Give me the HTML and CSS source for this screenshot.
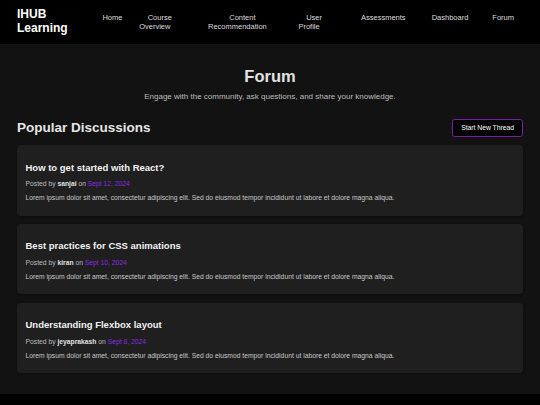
FILE: index.html
```html
<!DOCTYPE html>
<html lang="en">
<head>
<meta charset="utf-8">
<title>Forum - IHUB Learning</title>
<link rel="stylesheet" href="styles.css">
</head>
<body>
<header class="site-header">
  <div class="logo">IHUB Learning</div>
  <nav class="nav">
    <ul class="nav-list">
      <li class="nav-item"><a class="nav-link" href="#">Home</a></li>
      <li class="nav-item"><a class="nav-link" href="#">Course Overview</a></li>
      <li class="nav-item"><a class="nav-link" href="#">Content Recommendation</a></li>
      <li class="nav-item"><a class="nav-link" href="#">User Profile</a></li>
      <li class="nav-item"><a class="nav-link" href="#">Assessments</a></li>
      <li class="nav-item"><a class="nav-link" href="#">Dashboard</a></li>
      <li class="nav-item"><a class="nav-link" href="#">Forum</a></li>
    </ul>
  </nav>
</header>
<main class="main">
  <section class="hero">
    <h1 class="hero-title">Forum</h1>
    <p class="hero-sub">Engage with the community, ask questions, and share your knowledge.</p>
  </section>
  <section class="discussions">
    <div class="section-head">
      <h2 class="section-title">Popular Discussions</h2>
      <button class="btn-new" type="button">Start New Thread</button>
    </div>
    <div class="threads">
      <article class="thread">
        <h3 class="thread-title">How to get started with React?</h3>
        <p class="thread-meta">Posted by <strong class="author">sanjai</strong> on <span class="date">Sept 12, 2024</span></p>
        <p class="thread-text">Lorem ipsum dolor sit amet, consectetur adipiscing elit. Sed do eiusmod tempor incididunt ut labore et dolore magna aliqua.</p>
      </article>
      <article class="thread">
        <h3 class="thread-title">Best practices for CSS animations</h3>
        <p class="thread-meta">Posted by <strong class="author">kiran</strong> on <span class="date">Sept 10, 2024</span></p>
        <p class="thread-text">Lorem ipsum dolor sit amet, consectetur adipiscing elit. Sed do eiusmod tempor incididunt ut labore et dolore magna aliqua.</p>
      </article>
      <article class="thread">
        <h3 class="thread-title">Understanding Flexbox layout</h3>
        <p class="thread-meta">Posted by <strong class="author">jeyaprakash</strong> on <span class="date">Sept 8, 2024</span></p>
        <p class="thread-text">Lorem ipsum dolor sit amet, consectetur adipiscing elit. Sed do eiusmod tempor incididunt ut labore et dolore magna aliqua.</p>
      </article>
    </div>
  </section>
</main>
<footer class="site-footer"></footer>
</body>
</html>
```
FILE: styles.css
```css
html, body {
  margin: 0;
  padding: 0;
}
body {
  background: #000;
  font-family: "Liberation Sans", Arial, sans-serif;
  color: #ddd;
}

/* Header */
.site-header {
  height: 44px;
  box-sizing: border-box;
  padding: 0 17px;
  background: #000;
  display: flex;
  align-items: center;
}
.logo {
  width: min-content;
  font-size: 12px;
  font-weight: bold;
  color: #fff;
  line-height: 13.8px;
}
.nav {
  margin-left: auto;
}
.nav-list {
  display: flex;
  list-style: none;
  margin: 0;
  padding: 0 4px 0 0;
  font-size: 7.5px;
  line-height: 9px;
}
.nav-item {
  width: min-content;
  text-align: center;
}
.nav-item:nth-child(2) { margin-left: 11.7px; }
.nav-item:nth-child(3) { margin-left: 32.6px; }
.nav-item:nth-child(4) { margin-left: 26.7px; }
.nav-item:nth-child(5) { margin-left: 31.3px; }
.nav-item:nth-child(6) { margin-left: 16px; }
.nav-item:nth-child(7) { margin-left: 14px; }
.nav-link {
  color: #ddd;
  text-decoration: none;
  padding: 0 5px;
}

/* Main */
.main {
  background: #121212;
  padding: 0 17px 21px;
  overflow: hidden;
}
.hero {
  text-align: center;
  padding-top: 22.7px;
}
.hero-title {
  margin: 0;
  font-size: 16.5px;
  line-height: 19px;
  font-weight: bold;
  color: #e2e2e2;
}
.hero-sub {
  margin: 6.5px 0 0;
  font-size: 8px;
  line-height: 9.2px;
  color: #bdbdbd;
}
.section-head {
  margin-top: 17.6px;
  display: flex;
  justify-content: space-between;
  align-items: center;
}
.section-title {
  margin: 0;
  font-size: 13.5px;
  line-height: 15.5px;
  font-weight: bold;
  color: #e6e6e6;
}
.btn-new {
  height: 18px;
  box-sizing: border-box;
  padding: 0 8px;
  background: #000;
  color: #fff;
  border: 1px solid #7b1fa2;
  border-radius: 2.5px;
  font-family: "Liberation Sans", Arial, sans-serif;
  font-size: 6.75px;
  line-height: 1;
}
.threads {
  margin-top: 8.3px;
  display: flex;
  flex-direction: column;
  gap: 8.2px;
}
.thread {
  background: #1f1f1f;
  border-radius: 4px;
  padding: 8.5px 8.5px 7px;
  box-shadow: 0 1px 3px rgba(0, 0, 0, 0.35);
}
.thread-title {
  margin: 9px 0 6.5px;
  font-size: 9.5px;
  line-height: 10.9px;
  font-weight: bold;
  color: #f2f2f2;
}
.thread-meta,
.thread-text {
  margin: 6.5px 0;
  font-size: 6.75px;
  line-height: 7.8px;
  color: #bdbdbd;
}
.thread-text {
  color: #c8c8c8;
}
.author {
  color: #e0e0e0;
}
.date {
  color: #8a2be2;
}

/* Footer */
.site-footer {
  background: #000;
  height: 12px;
}
```
